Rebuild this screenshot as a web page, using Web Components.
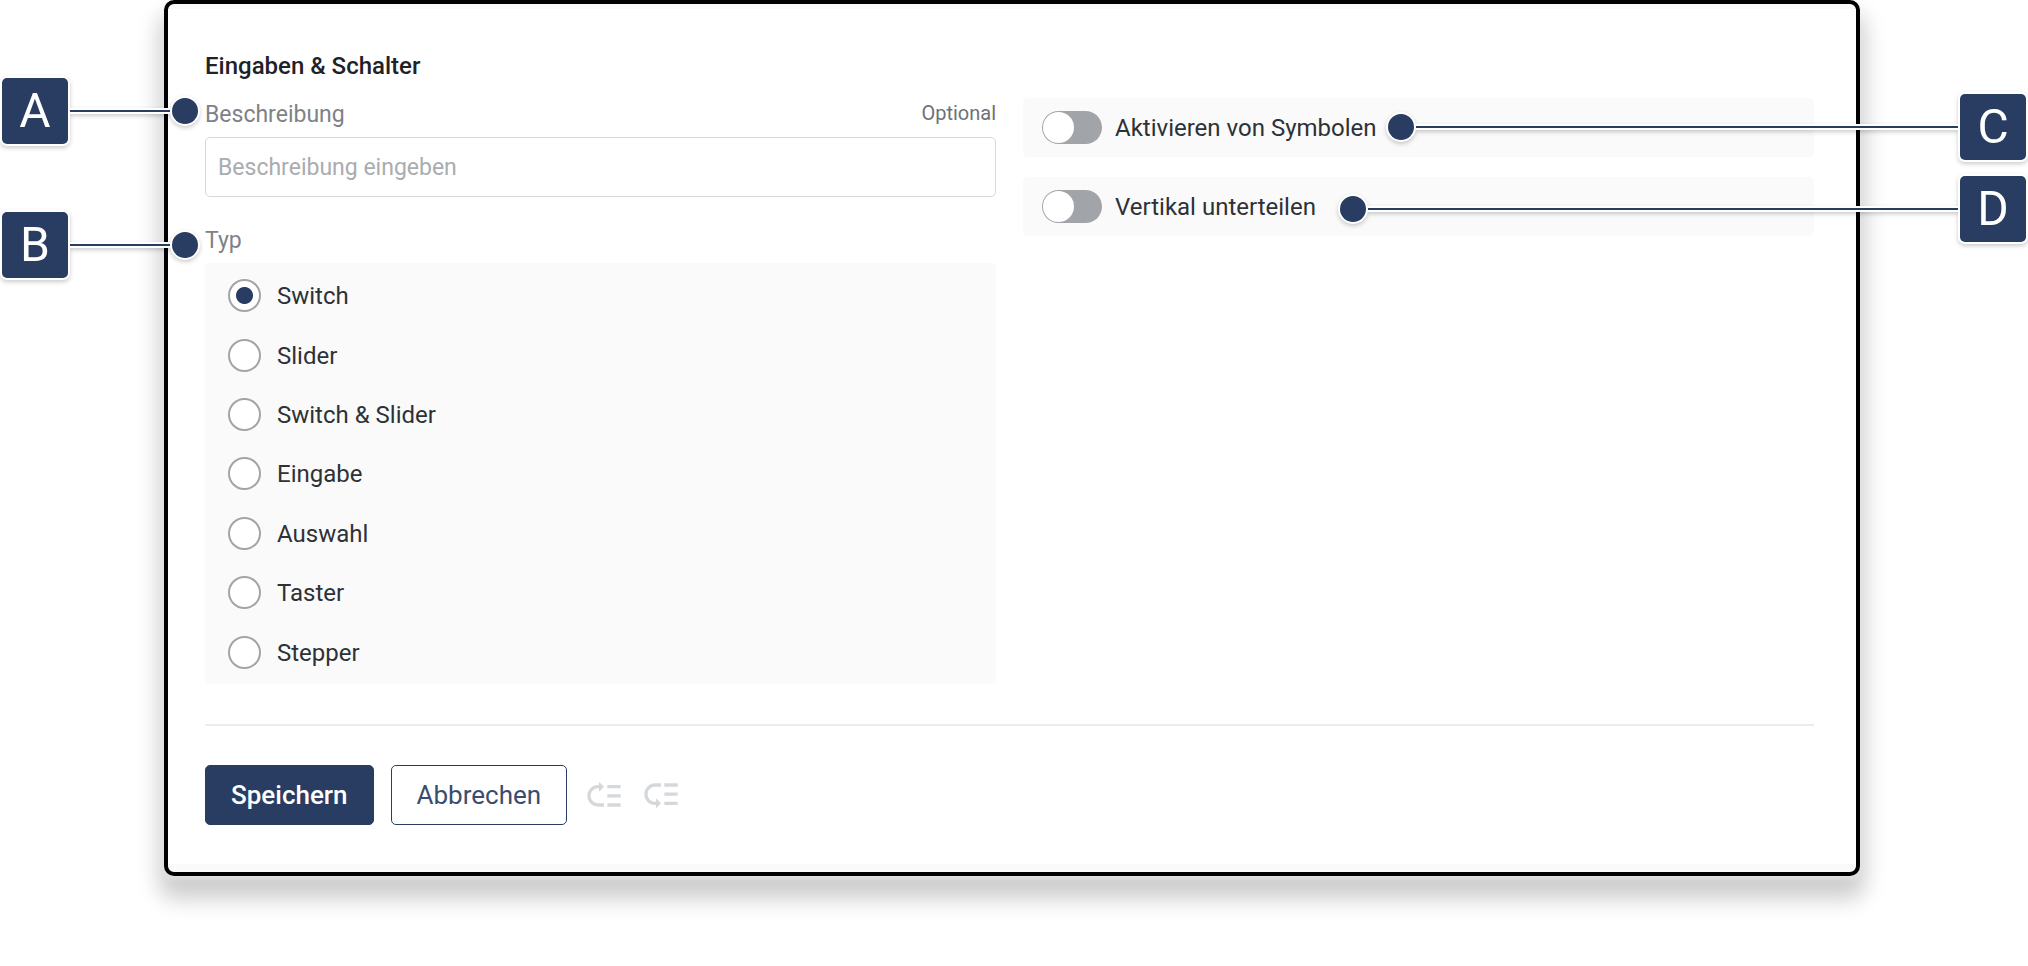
<!DOCTYPE html>
<html lang="de">
<head>
<meta charset="utf-8">
<meta name="viewport" content="width=device-width, initial-scale=1">
<title>Eingaben & Schalter</title>
<style>
    :root {
        --primary: #283d61;
        --text: #2e3136;
        --text-muted: #7d8288;
        --control: #a1a4a9;
        --surface: #fafafa;
        --radius: 5px;
    }

    body {
        margin: 0;
        background: #fff;
        color: var(--text);
        font-family: Roboto, "Liberation Sans", sans-serif;
        font-size: 24px;
        line-height: 28px;
    }
</style>
</head>
<body>
<settings-page>
    <settings-panel heading="Eingaben & Schalter">
        <text-field slot="main" label="Beschreibung" hint="Optional" placeholder="Beschreibung eingeben"></text-field>
        <radio-list slot="main" label="Typ" options="Switch|Slider|Switch & Slider|Eingabe|Auswahl|Taster|Stepper" selected="Switch"></radio-list>
        <toggle-switch slot="side">Aktivieren von Symbolen</toggle-switch>
        <toggle-switch slot="side">Vertikal unterteilen</toggle-switch>
        <action-button slot="actions" primary>Speichern</action-button>
        <action-button slot="actions">Abbrechen</action-button>
        <order-button slot="actions" direction="up"></order-button>
        <order-button slot="actions" direction="down"></order-button>
    </settings-panel>
    <call-out slot="callouts" class="a">A</call-out>
    <call-out slot="callouts" class="b">B</call-out>
    <call-out slot="callouts" class="c" reverse>C</call-out>
    <call-out slot="callouts" class="d" reverse>D</call-out>
</settings-page>

<script>
class SettingsPage extends HTMLElement {
    constructor() {
        super();
        this.attachShadow({ mode: 'open' });
        this.shadowRoot.innerHTML = `
            <style>
                :host {
                    display: block;
                    position: relative;
                    padding: 0 168px 48px 164px;
                }

                /* markers lie over the panel and its margins */
                ::slotted(call-out) {
                    position: absolute;
                }

                ::slotted(.a) { top: 78px; left: 2px; width: 196px; }
                ::slotted(.b) { top: 212px; left: 2px; width: 196px; }
                ::slotted(.c) { top: 94px; left: 1388px; right: 2px; }
                ::slotted(.d) { top: 176px; left: 1340px; right: 2px; }
            </style>
            <slot></slot>
            <slot name="callouts"></slot>
        `;
    }
}

class SettingsPanel extends HTMLElement {
    constructor() {
        super();
        this.attachShadow({ mode: 'open' });
    }

    connectedCallback() {
        this.shadowRoot.innerHTML = `
            <style>
                :host {
                    display: block;
                    border: 4px solid #000;
                    border-radius: 10px;
                    background: var(--surface);
                    padding: 5px 0 8px;
                    box-shadow:
                        0 4px 6px -2px rgba(255, 255, 255, 0.5),
                        0 18px 22px 5px rgba(0, 0, 0, 0.2);
                }

                form {
                    background: #fff;
                    padding: 43px 42px 39px 37px;
                }

                h2 {
                    margin: 0;
                    font-size: 24px;
                    font-weight: 500;
                    line-height: 28px;
                    color: #1f2226;
                }

                .columns {
                    display: grid;
                    grid-template-columns: 1fr 1fr;
                    gap: 27px;
                    margin-top: 18px;
                }

                .main {
                    display: flex;
                    flex-direction: column;
                    gap: 30px;
                }

                .side {
                    display: flex;
                    flex-direction: column;
                    gap: 20px;
                }

                .actions {
                    display: flex;
                    align-items: center;
                    gap: 17px;
                    margin-top: 40px;
                    padding-top: 39px;
                    border-top: 2px solid #e9edf0;
                }
            </style>
            <form>
                <h2></h2>
                <div class="columns">
                    <div class="main"><slot name="main"></slot></div>
                    <div class="side"><slot name="side"></slot></div>
                </div>
                <div class="actions"><slot name="actions"></slot></div>
            </form>
        `;
        this.shadowRoot.querySelector('h2').textContent = this.getAttribute('heading');
    }
}

class TextField extends HTMLElement {
    constructor() {
        super();
        this.attachShadow({ mode: 'open' });
    }

    connectedCallback() {
        this.shadowRoot.innerHTML = `
            <style>
                :host {
                    display: block;
                    font-size: 23px;
                }

                .head {
                    display: flex;
                    justify-content: space-between;
                    margin-bottom: 8px;
                    padding-top: 3px;
                    color: var(--text-muted);
                }

                .hint {
                    font-size: 20px;
                    line-height: 24px;
                    color: #6d7177;
                }

                input {
                    display: block;
                    box-sizing: border-box;
                    width: 100%;
                    height: 60px;
                    padding: 0 12px;
                    border: 1px solid #d5d8da;
                    border-radius: var(--radius);
                    background: #fff;
                    color: var(--text);
                    font: inherit;
                }

                input::placeholder {
                    color: #a9acb0;
                    opacity: 1;
                }
            </style>
            <div class="head">
                <label for="field">${this.getAttribute('label')}</label>
                <span class="hint">${this.getAttribute('hint')}</span>
            </div>
            <input id="field" type="text" placeholder="${this.getAttribute('placeholder')}">
        `;
    }
}

class RadioList extends HTMLElement {
    constructor() {
        super();
        this.attachShadow({ mode: 'open' });
    }

    connectedCallback() {
        const selected = this.getAttribute('selected');
        const options = this.getAttribute('options').split('|');

        this.shadowRoot.innerHTML = `
            <style>
                :host {
                    display: block;
                }

                .title {
                    color: var(--text-muted);
                    font-size: 23px;
                    margin-bottom: 8px;
                }

                .list {
                    display: grid;
                    grid-auto-rows: 1fr;
                    min-height: 416px;
                    padding: 3px 23px 2px;
                    border-radius: var(--radius);
                    background: var(--surface);
                }

                label {
                    display: flex;
                    align-items: center;
                    gap: 16px;
                }

                label span {
                    padding-top: 1px;
                }

                input {
                    appearance: none;
                    box-sizing: border-box;
                    width: 33px;
                    height: 33px;
                    margin: 0;
                    border: 2px solid var(--control);
                    border-radius: 50%;
                    background: #fff;
                }

                input:checked {
                    background: radial-gradient(circle, var(--primary) 8px, #fff 9px);
                }
            </style>
            <div class="title" id="title">${this.getAttribute('label')}</div>
            <div class="list" role="radiogroup" aria-labelledby="title">
                ${options.map(option => `
                    <label>
                        <input type="radio" name="type" ${option === selected ? 'checked' : ''}>
                        <span>${option.replace('&', '&amp;')}</span>
                    </label>
                `).join('')}
            </div>
        `;
    }
}

class ToggleSwitch extends HTMLElement {
    constructor() {
        super();
        this.attachShadow({ mode: 'open' });
        this.shadowRoot.innerHTML = `
            <style>
                :host {
                    display: block;
                    padding: 13px 19px;
                    border-radius: var(--radius);
                    background: var(--surface);
                }

                label {
                    display: flex;
                    align-items: center;
                    gap: 13px;
                }

                input {
                    appearance: none;
                    display: flex;
                    box-sizing: border-box;
                    width: 60px;
                    height: 33px;
                    margin: 0;
                    padding: 1px;
                    border-radius: 17px;
                    background: var(--control);
                }

                input::before {
                    content: "";
                    width: 31px;
                    height: 31px;
                    border-radius: 50%;
                    background: #fff;
                }

                input:checked {
                    justify-content: flex-end;
                    background: var(--primary);
                }
            </style>
            <label><input type="checkbox" role="switch"><slot></slot></label>
        `;
    }
}

class ActionButton extends HTMLElement {
    constructor() {
        super();
        this.attachShadow({ mode: 'open' });
        this.shadowRoot.innerHTML = `
            <style>
                :host {
                    display: block;
                }

                button {
                    display: block;
                    height: 60px;
                    padding: 0 25px;
                    border: 1px solid var(--primary);
                    border-radius: var(--radius);
                    background: #fff;
                    color: #3a4d6e;
                    font: inherit;
                    font-size: 26px;
                    cursor: pointer;
                }

                :host([primary]) button {
                    background: var(--primary);
                    color: #fff;
                    font-weight: 500;
                }
            </style>
            <button type="button"><slot></slot></button>
        `;
    }
}

class OrderButton extends HTMLElement {
    constructor() {
        super();
        this.attachShadow({ mode: 'open' });
    }

    connectedCallback() {
        const up = this.getAttribute('direction') === 'up';

        this.shadowRoot.innerHTML = `
            <style>
                :host {
                    display: block;
                }

                button {
                    display: block;
                    padding: 0;
                    border: none;
                    background: none;
                    color: #d5d8db;
                }

                svg {
                    display: block;
                    width: 40px;
                    height: 40px;
                    fill: currentColor;
                }
            </style>
            <button type="button" disabled aria-label="${up ? 'Nach oben' : 'Nach unten'}">
                <svg viewBox="0 0 24 24" aria-hidden="true">
                    <path ${up ? 'transform="matrix(1 0 0 -1 0 24)"' : ''} d="M14 5h8v2h-8zm0 5.5h8v2h-8zm0 5.5h8v2h-8zM2 11.5C2 15.08 4.92 18 8.5 18H9v2l3-3-3-3v2h-.5C6.02 16 4 13.98 4 11.5S6.02 7 8.5 7H12V5H8.5C4.92 5 2 7.92 2 11.5z"/>
                </svg>
            </button>
        `;
    }
}

class CallOut extends HTMLElement {
    constructor() {
        super();
        this.attachShadow({ mode: 'open' });
        this.shadowRoot.innerHTML = `
            <style>
                :host {
                    display: flex;
                    align-items: center;
                    filter: drop-shadow(0 2px 2px rgba(0, 0, 0, 0.2));
                }

                :host([reverse]) {
                    flex-direction: row-reverse;
                }

                .badge {
                    display: flex;
                    align-items: center;
                    justify-content: center;
                    width: 66px;
                    height: 66px;
                    border-radius: 5px;
                    box-shadow: 0 0 0 2px #fff;
                    background: var(--primary);
                    color: #fff;
                    font-size: 48px;
                    line-height: 66px;
                }

                .line {
                    flex: 1;
                    height: 2px;
                    margin: 0 2px;
                    border: solid #fff;
                    border-width: 2px 0;
                    background: var(--primary);
                }

                .dot {
                    width: 26px;
                    height: 26px;
                    border-radius: 50%;
                    box-shadow: 0 0 0 2px #fff;
                    background: var(--primary);
                }
            </style>
            <span class="badge"><slot></slot></span>
            <span class="line"></span>
            <span class="dot"></span>
        `;
    }
}

customElements.define('settings-page', SettingsPage);
customElements.define('settings-panel', SettingsPanel);
customElements.define('text-field', TextField);
customElements.define('radio-list', RadioList);
customElements.define('toggle-switch', ToggleSwitch);
customElements.define('action-button', ActionButton);
customElements.define('order-button', OrderButton);
customElements.define('call-out', CallOut);
</script>
</body>
</html>
